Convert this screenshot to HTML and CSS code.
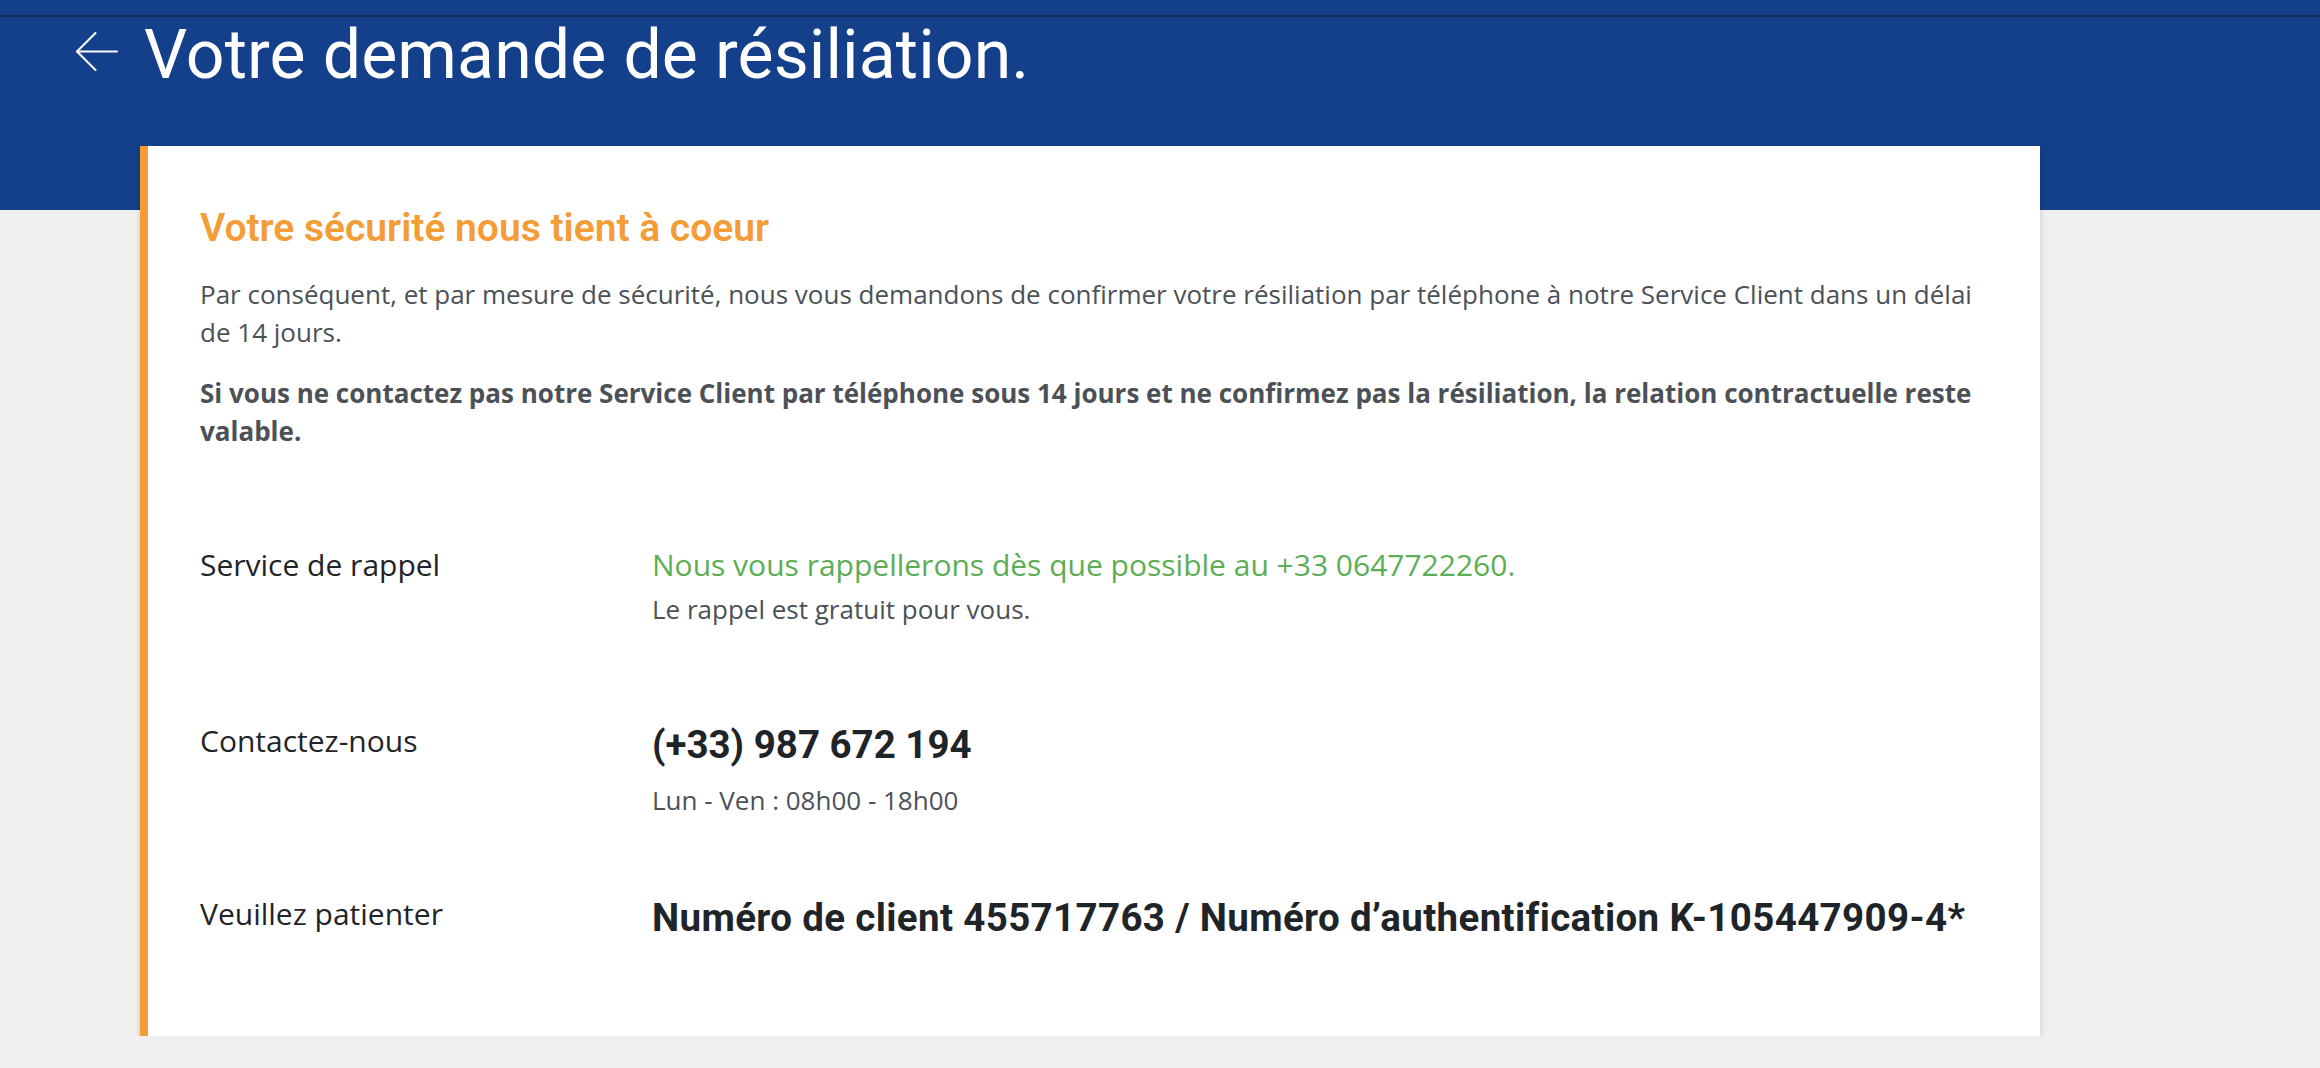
FILE: index.html
```html
<!DOCTYPE html>
<html lang="fr">
<head>
<meta charset="utf-8">
<title>Votre demande de résiliation</title>
<link rel="stylesheet" href="styles.css">
</head>
<body>
<header class="hero">
  <div class="topbar"></div>
  <div class="hero-title">
    <a class="back" href="#" aria-label="Retour">
      <svg width="42" height="40" viewBox="0 0 42 40" fill="none" stroke="#fff" stroke-width="2" stroke-linecap="round" stroke-linejoin="round">
        <path d="M1 19.5 H41"/>
        <path d="M19.5 1 L1 19.5 L19.5 38"/>
      </svg>
    </a>
    <h1 class="title">Votre demande de résiliation.</h1>
  </div>
</header>
<main class="content">
  <section class="card">
    <h2 class="card-title">Votre sécurité nous tient à coeur</h2>
    <p class="text">Par conséquent, et par mesure de sécurité, nous vous demandons de confirmer votre résiliation par téléphone à notre Service Client dans un délai de 14 jours.</p>
    <p class="text text-strong">Si vous ne contactez pas notre Service Client par téléphone sous 14 jours et ne confirmez pas la résiliation, la relation contractuelle reste valable.</p>

    <div class="row row-callback">
      <div class="label">Service de rappel</div>
      <div class="value">
        <div class="green">Nous vous rappellerons dès que possible au +33 0647722260.</div>
        <div class="note note-tight">Le rappel est gratuit pour vous.</div>
      </div>
    </div>

    <div class="row row-contact">
      <div class="label">Contactez-nous</div>
      <div class="value">
        <div class="big">(+33) 987 672 194</div>
        <div class="note note-hours">Lun - Ven : 08h00 - 18h00</div>
      </div>
    </div>

    <div class="row row-wait">
      <div class="label">Veuillez patienter</div>
      <div class="value">
        <div class="big big-wide">Numéro de client 455717763 / Numéro d’authentification K-105447909-4*</div>
      </div>
    </div>
  </section>
</main>
</body>
</html>
```
FILE: styles.css
```css
* { box-sizing: border-box; }

body {
  margin: 0;
  background: #efefef;
  font-family: "Open Sans", "Noto Sans", sans-serif;
  color: #23282d;
}

.hero {
  background: #143f8a;
  height: 210px;
}

.topbar {
  height: 17px;
  border-bottom: 2px solid #0c2a60;
}

.hero-title {
  display: flex;
  align-items: flex-start;
  padding-left: 76px;
}

.back {
  display: block;
  margin-top: 15px;
  margin-right: 26px;
  line-height: 0;
}

.title {
  margin: 0;
  font-family: Roboto, "Liberation Sans", sans-serif;
  font-weight: 400;
  font-size: 68px;
  line-height: 76px;
  color: #fff;
  letter-spacing: 0.1px;
}

.content {
  margin-top: -64px;
  padding-left: 140px;
}

.card {
  width: 1900px;
  background: #fff;
  border-left: 8px solid #f49d37;
  padding: 58px 54px 95px 52px;
  box-shadow: 0 2px 6px rgba(0, 0, 0, 0.16);
}

.card-title {
  margin: 0 0 23px;
  font-family: Roboto, "Liberation Sans", sans-serif;
  font-weight: 600;
  font-size: 39px;
  line-height: 48px;
  color: #f49d37;
}

.text {
  margin: 0;
  font-size: 26px;
  line-height: 38px;
  color: #4b5157;
}

.text-strong {
  margin-top: 23px;
  font-weight: 700;
}

.row {
  display: flex;
  align-items: flex-start;
}

.row-callback { margin-top: 96px; }
.row-contact { margin-top: 96px; }
.row-wait { margin-top: 78px; }

.label {
  flex: 0 0 452px;
  padding-top: 1px;
  font-size: 30px;
  line-height: 36px;
  color: #1f2428;
}

.value {
  flex: 1;
}

.green {
  font-size: 30px;
  line-height: 38px;
  color: #5cad55;
}

.note {
  font-size: 26px;
  line-height: 34px;
  color: #4b5157;
}

.note-tight { margin-top: 8px; }
.note-hours { margin-top: 15px; }

.big {
  font-family: Roboto, "Liberation Sans", sans-serif;
  font-weight: 700;
  font-size: 38.5px;
  line-height: 46px;
  color: #1f2428;
}

.big-wide {
  letter-spacing: 0.36px;
}
```
